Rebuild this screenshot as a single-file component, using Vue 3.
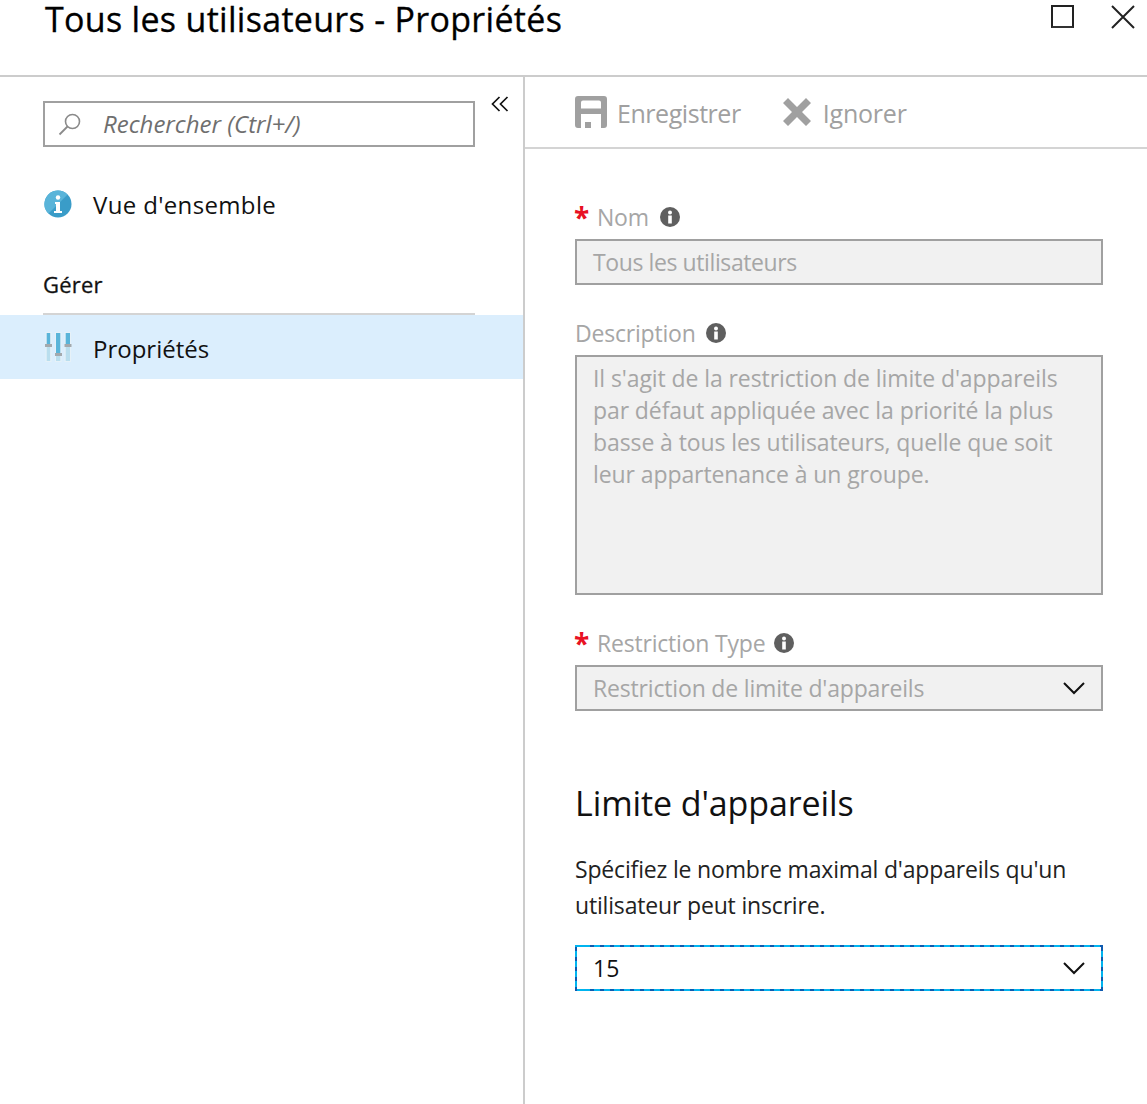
<script setup>
const descriptionText = "Il s'agit de la restriction de limite d'appareils par défaut appliquée avec la priorité la plus basse à tous les utilisateurs, quelle que soit leur appartenance à un groupe."
</script>

<template>
  <div class="page">
    <header class="top">
      <h1>Tous les utilisateurs - Propriétés</h1>
      <div class="win-btns">
        <span class="maximize"></span>
        <svg class="close" width="24" height="24" viewBox="0 0 24 24">
          <path d="M1 1L23 23M23 1L1 23" stroke="#222" stroke-width="2" fill="none" />
        </svg>
      </div>
    </header>

    <div class="columns">
      <aside class="side">
        <div class="search-row">
          <div class="search">
            <svg width="26" height="26" viewBox="0 0 26 26">
              <circle cx="15.5" cy="10.5" r="7" stroke="#8a8a8a" stroke-width="1.6" fill="none" />
              <path d="M10.5 15.5L2.5 23.5" stroke="#8a8a8a" stroke-width="1.8" fill="none" />
            </svg>
            <span class="search-text">Rechercher (Ctrl+/)</span>
          </div>
          <svg class="collapse" width="18" height="16" viewBox="0 0 18 16">
            <path d="M8.5 1L1.5 8L8.5 15M16.5 1L9.5 8L16.5 15" stroke="#111" stroke-width="1.7" fill="none" />
          </svg>
        </div>

        <div class="overview">
          <svg width="28" height="28" viewBox="0 0 28 28">
            <circle cx="14" cy="14" r="13.5" fill="#3a9cc8" />
            <path d="M14 .5A13.5 13.5 0 0 0 4.5 23.6L23.6 4.5A13.5 13.5 0 0 0 14 .5Z" fill="#59b4d9" />
            <circle cx="14" cy="7.500" r="2.200" fill="#fff" />
            <path d="M11 12h5v9h2v2h-8v-2h2v-7h-1z" fill="#fff" />
          </svg>
          <span>Vue d'ensemble</span>
        </div>

        <div class="section-title">Gérer</div>

        <div class="active-row">
          <svg width="28" height="32" viewBox="0 0 28 32">
            <g fill="#e6f1f8">
              <rect x="1.500" y="1" width="6" height="30" />
              <rect x="11" y="1" width="6.500" height="30" />
              <rect x="20.500" y="1" width="6.500" height="30" />
            </g>
            <g fill="#b9deee">
              <rect x="2.700" y="14" width="3.500" height="16" />
              <rect x="12" y="24" width="4.300" height="6" />
              <rect x="21.700" y="14" width="4.300" height="16" />
            </g>
            <g fill="#59b4d9">
              <rect x="2.700" y="2" width="3.500" height="11" />
              <rect x="12" y="2" width="4.300" height="20" />
              <rect x="21.700" y="2" width="4.300" height="11" />
            </g>
            <g fill="#a3a9ad">
              <rect x="1" y="13" width="7" height="3" />
              <rect x="11" y="22" width="7" height="3" />
              <rect x="20.500" y="13" width="7" height="3" />
            </g>
          </svg>
          <span class="active-text">Propriétés</span>
        </div>
      </aside>

      <main class="content">
        <div class="toolbar">
          <div class="tool save">
            <svg width="32" height="32" viewBox="0 0 32 32">
              <path d="M3 0H29A3 3 0 0 1 32 3V29A3 3 0 0 1 29 32H26V18H6V32H3A3 3 0 0 1 0 29V3A3 3 0 0 1 3 0ZM8 4.500A2 2 0 0 0 6 6.500V12.500H26V6.500A2 2 0 0 0 24 4.500ZM10 26H16V32H10Z" fill="#a0a0a0" fill-rule="evenodd" />
            </svg>
            <span class="tool-text">Enregistrer</span>
          </div>
          <div class="tool discard">
            <svg width="28" height="28" viewBox="0 0 28 28">
              <path d="M5 0L14 9L23 0L28 5L19 14L28 23L23 28L14 19L5 28L0 23L9 14L0 5Z" fill="#a0a0a0" />
            </svg>
            <span class="tool-text">Ignorer</span>
          </div>
        </div>

        <div class="form">
          <div class="label first">
            <span class="star">*</span>
            <span>Nom</span>
            <svg class="hint" width="20" height="20" viewBox="0 0 20 20"><use href="#info-dot" /></svg>
          </div>
          <div class="field">Tous les utilisateurs</div>

          <div class="label second">
            <span>Description</span>
            <svg class="hint" width="20" height="20" viewBox="0 0 20 20"><use href="#info-dot" /></svg>
          </div>
          <div class="area">{{ descriptionText }}</div>

          <div class="label third">
            <span class="star">*</span>
            <span>Restriction Type</span>
            <svg class="hint" width="20" height="20" viewBox="0 0 20 20"><use href="#info-dot" /></svg>
          </div>
          <div class="field select">
            <span>Restriction de limite d'appareils</span>
            <svg width="22" height="13" viewBox="0 0 22 13"><path d="M1 1L11 11L21 1" stroke="#111" stroke-width="2" fill="none" /></svg>
          </div>

          <h2>Limite d'appareils</h2>
          <p class="help">Spécifiez le nombre maximal d'appareils qu'un utilisateur peut inscrire.</p>

          <div class="limit">
            <span>15</span>
            <svg width="22" height="13" viewBox="0 0 22 13"><path d="M1 1L11 11L21 1" stroke="#111" stroke-width="2" fill="none" /></svg>
          </div>
        </div>
      </main>
    </div>

    <svg width="0" height="0" class="defs">
      <defs>
        <g id="info-dot">
          <circle cx="10" cy="10" r="10" fill="#5f5f5f" />
          <circle cx="10" cy="5.500" r="2" fill="#fff" />
          <rect x="8.200" y="8.500" width="3.600" height="8" fill="#fff" />
        </g>
      </defs>
    </svg>
  </div>
</template>

<style>
html, body {
  margin: 0;
  background: #fff;
}
</style>

<style scoped>
.page {
  width: 1147px;
  height: 1104px;
  overflow: hidden;
  font-family: "Open Sans", "Noto Sans", sans-serif;
  color: #111;
  background: #fff;
}

.defs {
  position: absolute;
}

.top {
  display: flex;
  justify-content: space-between;
  height: 75px;
  border-bottom: 2px solid #ccc;
}

h1 {
  margin: 0 0 0 45px;
  font-size: 34px;
  font-weight: 400;
  line-height: 39px;
  color: #000;
  letter-spacing: 0.3px;
  -webkit-text-stroke: 0.3px #000;
}

.win-btns {
  display: flex;
  gap: 37px;
  padding: 5px 12px 0 0;
  align-items: flex-start;
}

.maximize {
  width: 19px;
  height: 19px;
  border: 2px solid #222;
  border-bottom-color: #333;
}

.columns {
  display: flex;
  height: 1027px;
}

.side {
  width: 523px;
  border-right: 2px solid #ccc;
}

.search-row {
  display: flex;
  padding: 24px 0 0 43px;
  height: 46px;
}

.search {
  display: flex;
  align-items: center;
  width: 432px;
  height: 46px;
  box-sizing: border-box;
  border: 2px solid #a0a0a0;
  padding-left: 12px;
  gap: 20px;
  font-size: 24px;
  font-style: italic;
  color: #6f6f6f;
}

.search-text {
  margin-bottom: 2px;
}

.collapse {
  margin: -5px 0 0 16px;
}

.overview {
  display: flex;
  align-items: center;
  gap: 21px;
  margin: 43px 0 0 44px;
  height: 28px;
  font-size: 24px;
  letter-spacing: 0.35px;
}

.section-title {
  margin: 50px 0 0 43px;
  width: 432px;
  height: 45px;
  border-bottom: 2px solid #d4d4d4;
  font-size: 22px;
  font-weight: 400;
  line-height: 32px;
  letter-spacing: 0.2px;
  -webkit-text-stroke: 0.3px #111;
}

.active-row {
  display: flex;
  align-items: center;
  gap: 21px;
  height: 64px;
  padding-left: 44px;
  background: #dbeefd;
  font-size: 24px;
}

.active-text {
  margin-top: 2px;
}

.content {
  flex: 1;
  min-width: 0;
}

.toolbar {
  display: flex;
  align-items: center;
  height: 70px;
  border-bottom: 2px solid #d4d4d4;
  padding-left: 50px;
  font-size: 25px;
  color: #a0a0a0;
  letter-spacing: -0.45px;
}

.tool {
  display: flex;
  align-items: center;
}

.tool-text {
  margin-top: 2px;
}

.save {
  gap: 10px;
}

.discard {
  gap: 12px;
  margin-left: 42px;
  letter-spacing: -0.2px;
}

.form {
  padding-left: 50px;
  width: 528px;
}

.label {
  display: flex;
  align-items: center;
  gap: 11px;
  height: 32px;
  font-size: 23px;
  color: #a6a6a6;
  letter-spacing: -0.2px;
}

.first {
  margin-top: 52px;
}

.second {
  margin-top: 32px;
}

.second .hint {
  margin-left: -1px;
}

.third {
  margin-top: 32px;
}

.third .hint {
  margin-left: -2px;
}

.star {
  color: #e81123;
  font-size: 28px;
  font-weight: 700;
  width: 11px;
  margin-left: -1px;
  margin-right: 1px;
}

.field {
  display: flex;
  align-items: center;
  justify-content: space-between;
  height: 46px;
  margin-top: 6px;
  box-sizing: border-box;
  border: 2px solid #a0a0a0;
  background: #f1f1f1;
  padding: 0 16px;
  font-size: 23px;
  color: #a6a6a6;
  letter-spacing: -0.4px;
}

.select {
  letter-spacing: -0.17px;
}

.area {
  height: 240px;
  margin-top: 6px;
  box-sizing: border-box;
  border: 2px solid #a0a0a0;
  background: #f1f1f1;
  padding: 5px 16px;
  font-size: 23px;
  line-height: 32px;
  color: #a6a6a6;
  letter-spacing: -0.09px;
}

h2 {
  margin: 67px 0 0;
  font-size: 34px;
  font-weight: 400;
  line-height: 50px;
  color: #111;
  letter-spacing: -0.1px;
}

.help {
  margin: 23px 0 0;
  font-size: 23px;
  line-height: 36px;
  color: #222;
  letter-spacing: -0.17px;
}

.limit {
  display: flex;
  align-items: center;
  justify-content: space-between;
  height: 46px;
  box-sizing: border-box;
  margin-top: 22px;
  padding: 0 16px;
  border: 2px solid transparent;
  background-image:
    repeating-linear-gradient(90deg, #0f5bb0 0 4px, transparent 4px 10px),
    repeating-linear-gradient(90deg, #0f5bb0 0 4px, transparent 4px 10px),
    repeating-linear-gradient(0deg, #0f5bb0 0 4px, transparent 4px 10px),
    repeating-linear-gradient(0deg, #0f5bb0 0 4px, transparent 4px 10px),
    linear-gradient(#fff, #fff),
    linear-gradient(#00b4ef, #00b4ef);
  background-size: 100% 2px, 100% 2px, 2px 100%, 2px 100%, 100% 100%, 100% 100%;
  background-position: 15px 0, 15px 100%, 0 0, 100% 0, 0 0, 0 0;
  background-repeat: no-repeat;
  background-origin: border-box;
  background-clip: border-box, border-box, border-box, border-box, padding-box, border-box;
  font-size: 23px;
  color: #111;
}
</style>
